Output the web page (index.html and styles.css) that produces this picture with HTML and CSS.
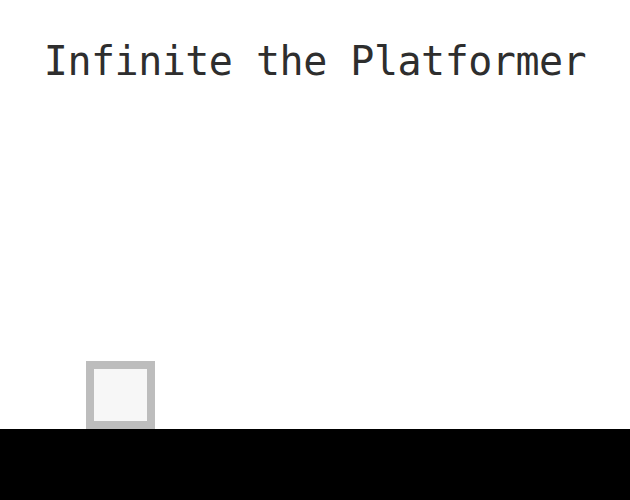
FILE: index.html
```html
<!DOCTYPE html>
<html>
<head>
<meta charset="utf-8">
<link rel="stylesheet" href="styles.css">
</head>
<body>
<div class="game">
  <h1 class="title">Infinite the Platformer</h1>
  <div class="stage">
    <div class="player"></div>
  </div>
  <div class="ground"></div>
</div>
</body>
</html>
```
FILE: styles.css
```css
html, body {
  margin: 0;
  padding: 0;
  background: #ffffff;
}
.game {
  width: 630px;
  height: 500px;
  display: flex;
  flex-direction: column;
}
.title {
  margin: 0;
  padding-top: 37px;
  font-family: "DejaVu Sans Mono", monospace;
  font-weight: normal;
  font-size: 40px;
  letter-spacing: -0.5px;
  line-height: 48px;
  color: #2e2e2e;
  text-align: center;
}
.stage {
  flex: 1;
  display: flex;
  align-items: flex-end;
  padding-left: 86px;
}
.player {
  width: 53px;
  height: 52px;
  border: 8px solid #bdbdbd;
  background: #f7f7f7;
}
.ground {
  height: 71px;
  background: #000000;
}
```
